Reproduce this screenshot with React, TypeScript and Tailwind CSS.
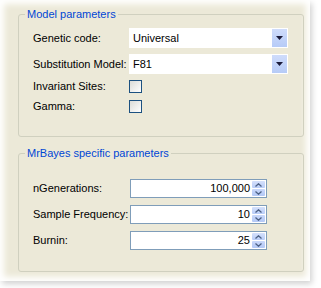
const font = { fontFamily: '"Liberation Sans", Arial, sans-serif' };

function Combo({ value }: { value: string }) {
  return (
    <div className="flex h-[20px] w-[159px] items-center bg-white">
      <span className="flex-1 pl-[4px] text-[11px] text-black">{value}</span>
      <div className="mr-[1px] flex h-[18px] w-[15px] items-center justify-center bg-gradient-to-b from-[#cfdcfb] to-[#b6cbf7]">
        <svg width="7" height="4" viewBox="0 0 7 4">
          <path d="M0 0h7L3.5 4z" fill="#1a1a3a" />
        </svg>
      </div>
    </div>
  );
}

function Check() {
  return (
    <div className="h-[13px] w-[13px] border border-[#1c5180] bg-gradient-to-br from-[#dcdcd7] to-white" />
  );
}

function Spinner({ value }: { value: string }) {
  return (
    <div className="flex h-[19px] w-[137px] items-center border border-[#7f9db9] bg-white">
      <span className="flex-1 pr-[2px] text-right text-[11px] text-black">{value}</span>
      <div className="mr-[1px] flex h-[15px] w-[13px] flex-col gap-[1px]">
        <div className="flex flex-1 items-center justify-center rounded-[1px] bg-gradient-to-b from-[#d4e0fb] to-[#b9cdf8]">
          <svg width="7" height="4" viewBox="0 0 7 4">
            <path d="M0.5 3.5L3.5 0.8L6.5 3.5" fill="none" stroke="#4d6185" strokeWidth="1.3" />
          </svg>
        </div>
        <div className="flex flex-1 items-center justify-center rounded-[1px] bg-gradient-to-b from-[#c9d8fa] to-[#b3c8f6]">
          <svg width="7" height="4" viewBox="0 0 7 4">
            <path d="M0.5 0.5L3.5 3.2L6.5 0.5" fill="none" stroke="#4d6185" strokeWidth="1.3" />
          </svg>
        </div>
      </div>
    </div>
  );
}

export default function App() {
  return (
    <div className="h-[288px] w-[321px] overflow-hidden bg-white" style={font}>
      <div className="h-[281px] w-[310px] bg-[#ECE9D8] pl-[18px] pt-[8px] shadow-[inset_0_0_6px_4px_#fff,2px_3px_6px_rgba(0,0,0,0.18)]">
        {/* Model parameters */}
        <fieldset className="w-[286px] rounded-[3px] border border-[#d0d0bf] pb-[23px] pl-[14px]">
          <legend className="-ml-[8px] px-[2px] text-[11px] leading-[13px] text-[#0046d5]">
            Model parameters
          </legend>
          <div className="mt-[7px] flex flex-col text-[11px] text-black">
            <div className="flex h-[20px] items-center">
              <span className="w-[96px]">Genetic code:</span>
              <Combo value="Universal" />
            </div>
            <div className="mt-[6px] flex h-[20px] items-center">
              <span className="w-[96px]">Substitution Model:</span>
              <Combo value="F81" />
            </div>
            <div className="mt-[6px] flex h-[13px] items-center">
              <span className="w-[96px]">Invariant Sites:</span>
              <Check />
            </div>
            <div className="mt-[7px] flex h-[13px] items-center">
              <span className="w-[96px]">Gamma:</span>
              <Check />
            </div>
          </div>
        </fieldset>

        {/* MrBayes specific parameters */}
        <fieldset className="mt-[10px] w-[286px] rounded-[3px] border border-[#d0d0bf] pb-[21px] pl-[14px]">
          <legend className="-ml-[8px] px-[2px] text-[11px] leading-[13px] text-[#0046d5]">
            MrBayes specific parameters
          </legend>
          <div className="mt-[19px] flex flex-col gap-[7px] text-[11px] text-black">
            <div className="flex items-center">
              <span className="w-[97px]">nGenerations:</span>
              <Spinner value="100,000" />
            </div>
            <div className="flex items-center">
              <span className="w-[97px]">Sample Frequency:</span>
              <Spinner value="10" />
            </div>
            <div className="flex items-center">
              <span className="w-[97px]">Burnin:</span>
              <Spinner value="25" />
            </div>
          </div>
        </fieldset>
      </div>
    </div>
  );
}
